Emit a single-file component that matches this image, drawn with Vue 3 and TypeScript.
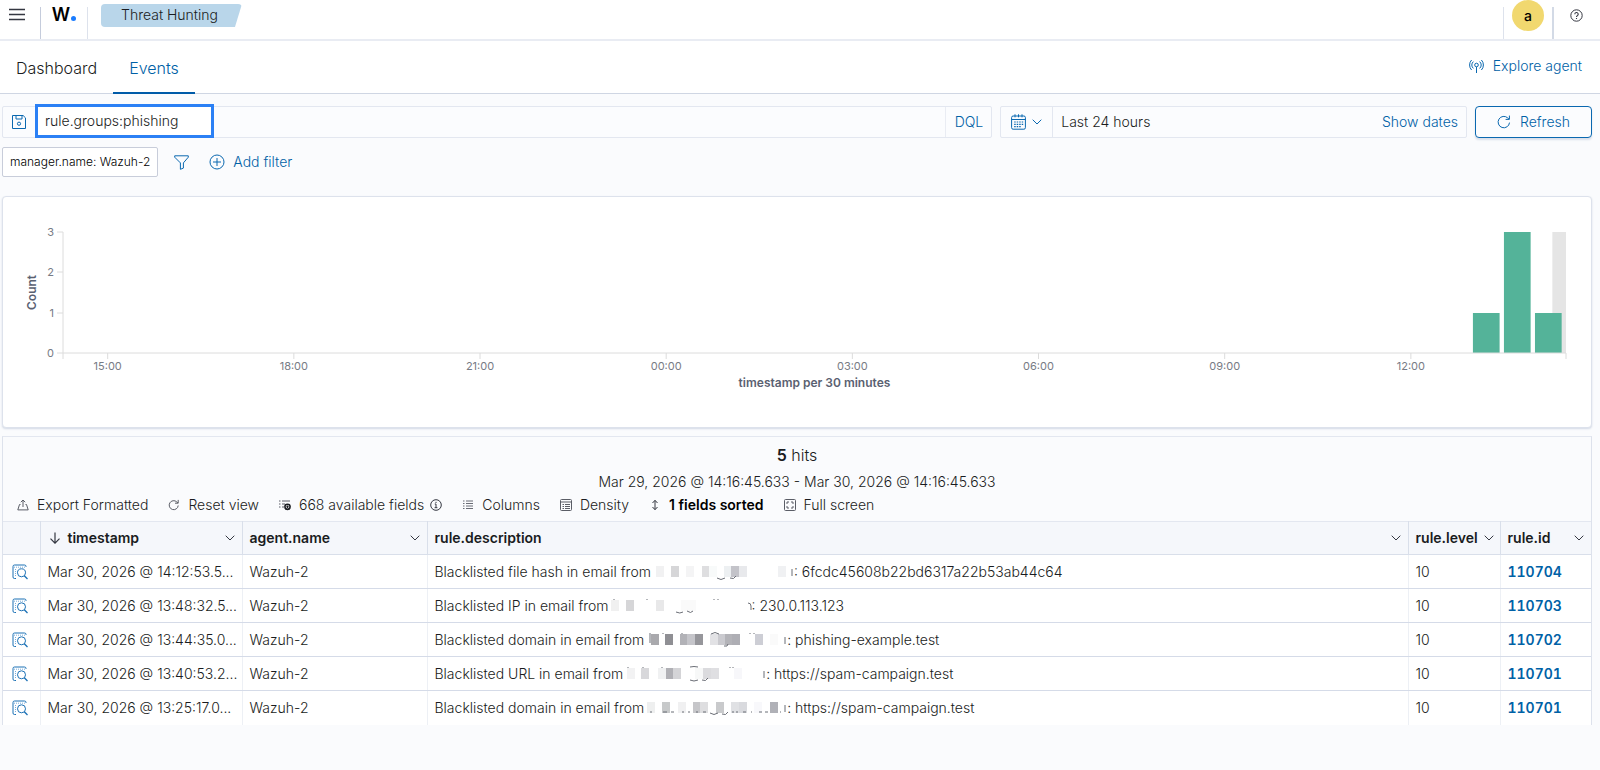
<script setup lang="ts">
import { ref } from 'vue'

interface Mosaic {
  width: number
  blocks: [number, string][]
  marks: string
}

interface EventRow {
  time: string
  agent: string
  lead: string
  mosaic: Mosaic
  tail: string
  level: number
  id: string
}

const query = ref('rule.groups:phishing')

const rows: EventRow[] = [
  {
    time: 'Mar 30, 2026 @ 14:12:53.5...',
    agent: 'Wazuh-2',
    lead: 'Blacklisted file hash in email from',
    mosaic: {
      width: 143,
      blocks: [[5, '#f1f1f2'], [20, '#d6d6d8'], [35, '#f4f4f5'], [51, '#dedee0'], [58, '#f8fafa'], [73, '#edf0f2'], [80, '#c3c3c9'], [88, '#e8e9ec'], [127, '#f0f1f3']],
      marks: 'M66 14q4 3 8 0M79 14q4 2 6-2M141 5v7',
    },
    tail: ': 6fcdc45608b22bd6317a22b53ab44c64',
    level: 10,
    id: '110704',
  },
  {
    time: 'Mar 30, 2026 @ 13:48:32.5...',
    agent: 'Wazuh-2',
    lead: 'Blacklisted IP in email from',
    mosaic: {
      width: 143,
      blocks: [[2, '#f0f0f0'], [17, '#d6d6d8'], [47, '#e8e8e9'], [72, '#fafafa'], [79, '#fafafa']],
      marks: 'M5 1v1M38 1v1M67 14q4 2 7 0M78 13q4 3 6 0M105 1v1M109 1v1M139 5q3 0 3 3v4',
    },
    tail: ': 230.0.113.123',
    level: 10,
    id: '110703',
  },
  {
    time: 'Mar 30, 2026 @ 13:44:35.0...',
    agent: 'Wazuh-2',
    lead: 'Blacklisted domain in email from',
    mosaic: {
      width: 143,
      blocks: [[7, '#a9a9ad'], [21, '#8f8f94'], [36, '#b2b2b7'], [43, '#c5c5ca'], [51, '#96969b'], [66, '#e2e2e5'], [74, '#cacacf'], [81, '#b3b3b8'], [88, '#aeaeb4'], [111, '#cdced5'], [126, '#fafafa']],
      marks: 'M6 1v10M19 1v1M38 1v1M67 2q4-3 8 0M80 14q4 1 4-2M106 1v1M110 1v1M141 5v7',
    },
    tail: ': phishing-example.test',
    level: 10,
    id: '110702',
  },
  {
    time: 'Mar 30, 2026 @ 13:40:53.2...',
    agent: 'Wazuh-2',
    lead: 'Blacklisted URL in email from',
    mosaic: {
      width: 143,
      blocks: [[4, '#f2f2f3'], [18, '#d8d8db'], [35, '#f0f1f2'], [43, '#b0b0b5'], [50, '#d4d4d7'], [72, '#f7f8f8'], [80, '#dbdbde'], [88, '#dfdfe2'], [111, '#f7f7fa']],
      marks: 'M5 1v1M20 1v1M39 1v1M67 14q4 2 8 0M79 14q4 2 6-2M67 1q4-1 8 0M107 1v1M110 1v1M141 5v7',
    },
    tail: ': https://spam-campaign.test',
    level: 10,
    id: '110701',
  },
  {
    time: 'Mar 30, 2026 @ 13:25:17.0...',
    agent: 'Wazuh-2',
    lead: 'Blacklisted domain in email from',
    mosaic: {
      width: 143,
      blocks: [[3, '#eeefef'], [18, '#c7c9ca'], [34, '#f0f0f1'], [49, '#c6c6c9'], [56, '#dedee0'], [72, '#c9cacc'], [87, '#e0e1e4'], [95, '#d9dade'], [110, '#f8f8fb'], [126, '#b0b1b7']],
      marks: 'M6 12h2M19 12h4M27 12h3M38 12h2M44 12h2M52 12h2M59 12h3M66 13q4 3 8 0M78 14q4 2 6-2M88 12h2M92 12h2M99 12h3M107 12h1M115 12h3M121 12h3M136 12h1M141 5v7',
    },
    tail: ': https://spam-campaign.test',
    level: 10,
    id: '110701',
  },
]

/* Time axis, in hours counted from midnight of the first day */
const domainStart = 14.28
const domainEnd = 38.5
const pct = (h: number): string => `${((h - domainStart) / (domainEnd - domainStart)) * 100}%`
const widthPct = (h: number): string => `${(h / (domainEnd - domainStart)) * 100}%`

const plotHeight = 121
const counts = [0, 1, 2, 3]
const yOf = (n: number): number => plotHeight - Math.round((n * plotHeight) / 3)
const ticks = [15, 18, 21, 24, 27, 30, 33, 36]
const tickLabel = (h: number): string => `${String(h % 24).padStart(2, '0')}:00`
const bars = [
  { at: 37, count: 1 },
  { at: 37.5, count: 3 },
  { at: 38, count: 1 },
]
const now = 38.28
</script>

<template>
  <div class="page">
    <header class="top">
      <button class="bare menu" type="button" aria-label="Toggle menu">
        <svg width="16" height="14" viewBox="0 0 16 14"><path d="M0 1.500h16M0 6.500h16M0 11.500h16" stroke="#343741" stroke-width="1.400" /></svg>
      </button>
      <span class="rule rule-dark"></span>
      <a class="logo" href="#" aria-label="Home">W<span class="dot"></span></a>
      <span class="rule"></span>
      <div class="crumb">Threat Hunting</div>
      <div class="grow"></div>
      <span class="rule"></span>
      <button class="avatar" type="button">a</button>
      <span class="rule rule-thick"></span>
      <button class="bare help" type="button" aria-label="Help">
        <svg width="13" height="13" viewBox="0 0 13 13" fill="none" stroke="#343741"><circle cx="6.5" cy="6.5" r="5.7" /><path d="M4.8 5.2a1.7 1.7 0 1 1 2.5 1.5q-.8.4-.8 1.3M6.5 9v1.1" stroke-width="1.1" /></svg>
      </button>
    </header>

    <nav class="tabs">
      <a class="tab" href="#">Dashboard</a>
      <a class="tab active" href="#">Events</a>
      <a class="explore" href="#">
        <svg width="17" height="16" viewBox="0 0 17 16" fill="none" stroke="#0a68b0"><circle cx="8.5" cy="7" r="1.8" /><path d="M8.5 8.8V15M5.4 10.4a4.4 4.4 0 0 1 0-6.8M11.6 10.4a4.4 4.4 0 0 0 0-6.8M3.6 12q-2-2-2-5t2-5M13.4 12q2-2 2-5t-2-5" /></svg>
        Explore agent
      </a>
    </nav>

    <section class="search">
      <div class="querybar">
        <button class="bare save" type="button" aria-label="Saved queries">
          <svg width="16" height="16" viewBox="0 0 16 16" fill="none" stroke="#0a68b0"><path d="M1.5 1.5h10.600l2.400 2.400v10.600h-13z" /><path d="M5 1.500v3.500h6V1.500" /><circle cx="8" cy="9.700" r="1.600" /></svg>
        </button>
        <input v-model="query" class="query" type="text" aria-label="Search query" />
        <div class="grow"></div>
        <button class="bare dql" type="button">DQL</button>
      </div>
      <div class="datebar">
        <button class="bare calendar" type="button" aria-label="Date quick select">
          <svg width="15" height="16" viewBox="0 0 15 16" fill="none" stroke="#0a68b0"><rect x=".6" y="2" width="13.800" height="13.200" rx="1.500" /><path d="M.6 5.500h13.800M4 .3v3M7.500.3v3M11 .3v3" /><path d="M3.200 8h9M3.200 10.300h9M3.200 12.600h7" stroke-dasharray="1.500 1" stroke-width="1.200" /></svg>
          <svg width="10" height="6" viewBox="0 0 10 6" fill="none" stroke="#0a68b0"><path d="M.7.7 5 5 9.300.7" /></svg>
        </button>
        <div class="range">Last 24 hours</div>
        <button class="bare show" type="button">Show dates</button>
      </div>
      <button class="refresh" type="button">
        <svg width="14" height="14" viewBox="0 0 14 14" fill="none" stroke="#0a68b0"><path d="M12.500 7.600A5.700 5.700 0 1 1 10.800 3L12 4.200M12.400.6v3.800H8.600" /></svg>
        Refresh
      </button>
    </section>

    <section class="filters">
      <button class="pill" type="button">manager.name: Wazuh-2</button>
      <button class="bare" type="button" aria-label="Filter options">
        <svg width="15" height="15" viewBox="0 0 15 15" fill="none" stroke="#0a68b0"><path d="M.7.8h13.600v1.400L9.400 7.900v5.200l-3 1.200V7.900L.7 2.200z" stroke-linejoin="round" /></svg>
      </button>
      <button class="bare add" type="button">
        <svg width="16" height="16" viewBox="0 0 16 16" fill="none" stroke="#0a68b0"><circle cx="8" cy="8" r="7" /><path d="M8 4v8M4 8h8" /></svg>
        Add filter
      </button>
    </section>

    <section class="panel chart">
      <div class="ylabel">Count</div>
      <div class="plotwrap">
        <svg class="plot" width="100%" :height="plotHeight" aria-label="Events over time">
          <rect :x="pct(now)" y="0" :width="widthPct(domainEnd - now)" :height="plotHeight" fill="#e5e5e5" />
          <rect
            v-for="b in bars"
            :key="b.at"
            :x="pct(b.at)"
            :y="yOf(b.count)"
            :width="widthPct(0.43)"
            :height="plotHeight - yOf(b.count)"
            fill="#54b399"
          />
          <g stroke="#dcdcdc">
            <line x1="0" y1="0" x2="0" :y2="plotHeight + 6" />
            <line x1="0" :y1="plotHeight" x2="100%" :y2="plotHeight" />
            <line x1="100%" :y1="plotHeight" x2="100%" :y2="plotHeight + 6" />
            <line v-for="n in counts" :key="n" x1="-6" :y1="yOf(n)" x2="0" :y2="yOf(n)" />
            <line v-for="t in ticks" :key="t" :x1="pct(t)" :y1="plotHeight" :x2="pct(t)" :y2="plotHeight + 6" />
          </g>
          <text v-for="n in counts" :key="n" class="tick" x="-9" :y="yOf(n) + 4" text-anchor="end">{{ n }}</text>
          <text v-for="t in ticks" :key="t" class="tick" :x="pct(t)" :y="plotHeight + 17" text-anchor="middle">{{ tickLabel(t) }}</text>
        </svg>
        <div class="xlabel">timestamp per 30 minutes</div>
      </div>
    </section>

    <section class="results">
      <div class="hits"><b>5</b> hits</div>
      <div class="span">Mar 29, 2026 @ 14:16:45.633 - Mar 30, 2026 @ 14:16:45.633</div>
      <div class="toolbar">
        <button class="bare tool" type="button">
          <svg width="12" height="12" viewBox="0 0 12 12" fill="none" stroke="#5a5d66"><path d="M3.500 5.500h-1L.8 10.900h10.400L9.500 5.500h-1M6 8V1M3.800 3.200 6 1l2.200 2.200" /></svg>
          Export Formatted
        </button>
        <button class="bare tool" type="button">
          <svg width="12" height="12" viewBox="0 0 12 12" fill="none" stroke="#5a5d66"><path d="M10.200 6.500A4.500 4.500 0 1 1 8.800 2.900L9.900 4M10.200.9v3.300H7" /></svg>
          Reset view
        </button>
        <div class="group">
          <button class="bare tool" type="button">
            <svg width="12" height="12" viewBox="0 0 12 12" fill="none" stroke="#5a5d66"><path d="M0 2h1.500M3 2h8M0 5h1.500M3 5h3M0 8h1.500M3 8h2" /><circle cx="8.500" cy="7.800" r="2.600" stroke="#1a1c21" stroke-width="1.600" /><path d="M8.500 6.500v2.600M7.200 7.800h2.600" stroke="#1a1c21" /></svg>
            668 available fields
          </button>
          <svg class="info" width="12" height="12" viewBox="0 0 12 12" fill="none" stroke="#343741"><circle cx="6" cy="6" r="5.300" /><path d="M4.800 5H6v3.700M4.600 8.700h2.800M6 2.800v1.200" /></svg>
        </div>
        <button class="bare tool" type="button">
          <svg width="12" height="12" viewBox="0 0 12 12" stroke="#6a6d76"><path d="M1 2h1.500M4 2h7M1 4.500h1.500M4 4.500h7M1 7h1.500M4 7h7M1 9.500h1.500M4 9.500h7" /></svg>
          Columns
        </button>
        <button class="bare tool" type="button">
          <svg width="12" height="12" viewBox="0 0 12 12" fill="none" stroke="#5a5d66"><rect x=".5" y=".5" width="11" height="11" rx="1" /><path d="M.5 3h11M2.500 5.500H4M5 5.500h5M2.500 7.500H4M5 7.500h5M2.500 9.500H4M5 9.500h5" /></svg>
          Density
        </button>
        <button class="bare tool strong" type="button">
          <svg width="12" height="12" viewBox="0 0 12 12" fill="none" stroke="#343741"><path d="M6 1.500v9M3.500 4 6 1.300 8.500 4M3.500 8 6 10.700 8.500 8" /></svg>
          1 fields sorted
        </button>
        <button class="bare tool" type="button">
          <svg width="12" height="12" viewBox="0 0 12 12" fill="none" stroke="#5a5d66"><rect x=".5" y=".5" width="11" height="11" rx="1" /><path d="M3 5V3h2M7 3h2v2M9 7v2H7M5 9H3V7" /></svg>
          Full screen
        </button>
      </div>

      <table class="grid">
        <colgroup>
          <col class="c-icon" /><col class="c-time" /><col class="c-agent" /><col /><col class="c-level" /><col class="c-id" />
        </colgroup>
        <thead>
          <tr>
            <th aria-label="Inspect"></th>
            <th v-for="name in ['timestamp', 'agent.name', 'rule.description', 'rule.level', 'rule.id']" :key="name" scope="col">
              <div class="head">
                <svg v-if="name === 'timestamp'" width="14" height="12" viewBox="0 0 14 12" fill="none" stroke="#343741" stroke-width="1.200"><path d="M7 .5v10.500M2.500 6.700 7 11.200l4.500-4.500" /></svg>
                {{ name }}
                <svg class="chev" width="10" height="6" viewBox="0 0 10 6" fill="none" stroke="#343741"><path d="M.7.7 5 5 9.300.7" /></svg>
              </div>
            </th>
          </tr>
        </thead>
        <tbody>
          <tr v-for="(r, i) in rows" :key="i">
            <td class="icon">
              <button class="bare" type="button" aria-label="Inspect document details">
                <svg width="16" height="16" viewBox="0 0 16 16" fill="none" stroke="#1a70b5"><path d="M4 14.500H2.500a1.500 1.500 0 0 1-1.500-1.500V2.500A1.500 1.500 0 0 1 2.500 1h10A1.500 1.500 0 0 1 14 2.500V3" /><path d="M2 3.200h11" stroke="#79addb" stroke-dasharray="1 1" /><path d="M3.500 5v7" stroke="#79addb" stroke-dasharray="1 1" /><circle cx="9.500" cy="8.800" r="4" /><path d="m12.300 11.800 3.200 3.200" stroke-width="1.300" /></svg>
              </button>
            </td>
            <td>{{ r.time }}</td>
            <td>{{ r.agent }}</td>
            <td>
              <div class="desc">
                <span>{{ r.lead }}</span>
                <svg :width="r.mosaic.width" height="16" aria-label="redacted">
                  <rect v-for="b in r.mosaic.blocks" :key="b[0]" :x="b[0]" y="2" width="8" height="11" :fill="b[1]" />
                  <path :d="r.mosaic.marks" fill="none" stroke="#6b6e76" />
                </svg>
                <span>{{ r.tail }}</span>
              </div>
            </td>
            <td>{{ r.level }}</td>
            <td><a class="id" href="#">{{ r.id }}</a></td>
          </tr>
        </tbody>
      </table>
    </section>
  </div>
</template>

<style>
body {
  margin: 0;
  background: #fafbfd;
}
</style>

<style scoped>
.page {
  min-height: 100vh;
  font-family: Inter, "Liberation Sans", sans-serif;
  font-size: 14px;
  font-weight: 300;
  line-height: 20px;
  color: #1a1c21;
  background: #fafbfd;
}
.page * {
  box-sizing: border-box;
}
svg {
  display: block;
  flex: none;
}
a {
  color: #0061a6;
  text-decoration: none;
}
button,
input {
  font: inherit;
}
.bare {
  display: flex;
  align-items: center;
  padding: 0;
  border: 0;
  background: none;
  color: #0061a6;
}
.grow {
  flex: 1;
}
.top {
  display: flex;
  align-items: flex-start;
  height: 41px;
  background: #fff;
  border-bottom: 2px solid #e9ecf3;
}
.menu {
  width: 40px;
  height: 30px;
  padding-left: 9px;
}
.rule {
  width: 1px;
  height: 32px;
  margin-top: 7px;
  background: #dde2ec;
}
.rule-dark {
  background: #c5ccdc;
}
.rule-thick {
  width: 2px;
  background: #d3dae6;
}
.logo {
  display: flex;
  align-items: baseline;
  justify-content: center;
  gap: 1px;
  width: 46px;
  height: 30px;
  font-size: 18px;
  font-weight: 600;
  line-height: 30px;
  color: #000;
}
.dot {
  width: 5px;
  height: 5px;
  border-radius: 50%;
  background: #1a7cff;
}
.crumb {
  height: 23px;
  margin: 4px 0 0 13px;
  padding: 0 24px 0 20px;
  line-height: 22px;
  background: #b9d6ea;
  border-radius: 4px;
  clip-path: polygon(0 0, 100% 0, calc(100% - 7px) 100%, 0 100%);
}
.avatar {
  width: 32px;
  height: 31px;
  margin: 0 8px;
  padding: 0;
  border: 0;
  border-radius: 50%;
  background: #f1d86f;
  font-weight: 500;
  color: #000;
}
.help {
  height: 30px;
  padding: 0 17px 0 16px;
}
.tabs {
  display: flex;
  background: #fff;
  height: 53px;
  border-bottom: 1px solid #cfd6e3;
  font-size: 16px;
}
.tab {
  height: 53px;
  padding: 0 16px;
  line-height: 54px;
  color: #1a1c21;
}
.tab.active {
  color: #0061a6;
  border-bottom: 2px solid #005ba8;
}
.explore {
  display: flex;
  align-items: center;
  gap: 8px;
  margin-left: auto;
  padding: 0 18px 2px 0;
  font-size: 14px;
}
.search {
  display: flex;
  gap: 8px;
  padding: 10px 8px 0 2px;
}
.querybar,
.datebar {
  display: flex;
  align-items: center;
  height: 32px;
  margin-top: 2px;
  border: 1px solid #e3e7f0;
  background: #fbfcfe;
  border-radius: 2px;
}
.querybar {
  flex: 991 1 0;
}
.datebar {
  flex: 466 1 0;
}
.save {
  width: 32px;
  padding-left: 8px;
}
.query {
  flex: none;
  width: 179px;
  height: 34px;
  margin-bottom: 2px;
  padding: 0 8px 2px 7px;
  border: 3px solid #2b80f5;
  border-radius: 0;
  outline: 0;
  background: #fff;
  color: #1a1c21;
}
.dql {
  height: 100%;
  padding: 0 8px 0 9px;
  border-left: 1px solid #e9ecf3;
}
.calendar {
  gap: 6px;
  height: 100%;
  padding: 0 10px;
  border-right: 1px solid #e3e7f0;
}
.range {
  flex: 1;
  padding-left: 8px;
}
.show {
  padding-right: 8px;
}
.refresh {
  display: flex;
  flex: none;
  width: 117px;
  align-items: center;
  justify-content: center;
  gap: 9px;
  height: 32px;
  margin-top: 2px;
  padding: 0;
  border: 1px solid #0a68b0;
  border-radius: 4px;
  background: #fbfcfe;
  box-shadow: 0 2px 2px #d8dfea;
  color: #0061a6;
}
.filters {
  display: flex;
  align-items: center;
  gap: 20px;
  padding: 9px 2px 0;
}
.pill {
  height: 30px;
  margin-right: -4px;
  padding: 0 7px;
  border: 1px solid #c8cdda;
  border-radius: 2px;
  background: #fff;
  font-size: 12px;
  color: #000;
}
.add {
  gap: 8px;
}
.panel {
  margin: 19px 8px 0 2px;
  border: 1px solid #dde2ec;
  border-radius: 4px;
  background: #fff;
  box-shadow: 0 1px 2px #d3dae6;
}
.chart {
  display: flex;
  height: 232px;
  padding: 35px 25px 0 19px;
}
.ylabel {
  width: 20px;
  height: 121px;
  margin-right: 21px;
  line-height: 20px;
  writing-mode: vertical-rl;
  transform: rotate(180deg);
  text-align: center;
  font-size: 12px;
  font-weight: 600;
  color: #5a6171;
}
.plotwrap {
  flex: 1;
}
.plot {
  overflow: visible;
}
.tick {
  font-size: 11px;
  font-weight: 400;
  fill: #777b85;
}
.xlabel {
  margin-top: 20px;
  text-align: center;
  font-size: 12px;
  font-weight: 600;
  color: #5a6171;
}
.results {
  margin: 8px 8px 0 2px;
  border-top: 1px solid #e3e7f0;
  border-left: 1px solid #dde2ec;
  border-right: 1px solid #dde2ec;
}
.hits {
  padding-top: 8px;
  text-align: center;
  font-size: 16px;
}
.hits b {
  font-weight: 600;
}
.span {
  margin-top: 7px;
  text-align: center;
}
.toolbar {
  display: flex;
  gap: 20px;
  align-items: center;
  padding: 3px 0 6px 14px;
}
.tool {
  gap: 8px;
  color: #1a1c21;
}
.group {
  display: flex;
  align-items: center;
  gap: 6px;
}
.strong {
  font-weight: 600;
  color: #000;
}
.grid {
  width: 100%;
  table-layout: fixed;
  border-collapse: collapse;
  background: #fff;
}
.c-icon { width: 37px; }
.c-time { width: 202px; }
.c-agent { width: 185px; }
.c-level { width: 92px; }
.c-id { width: 91px; }
.grid th {
  height: 33px;
  padding: 0 7px 0 7px;
  border: 1px solid #d9dfea;
  border-top-color: #e3e7f0;
  background: #f5f7fb;
  font-weight: 600;
  text-align: left;
}
.grid th:first-child,
.grid td:first-child {
  border-left: 0;
}
.grid th:last-child,
.grid td:last-child {
  border-right: 0;
}
.head {
  display: flex;
  align-items: center;
  gap: 6px;
}
.chev {
  margin-left: auto;
}
.grid td {
  height: 34px;
  padding: 0 0 0 7px;
  border: 1px solid #edf0f5;
  border-bottom-color: #d5dbe8;
  white-space: nowrap;
}
.grid tbody tr:last-child td {
  border-bottom: 0;
}
.grid .icon {
  padding-left: 9px;
}
.desc {
  display: flex;
  align-items: center;
}
.id {
  font-weight: 600;
  font-variant-numeric: tabular-nums;
}
</style>
